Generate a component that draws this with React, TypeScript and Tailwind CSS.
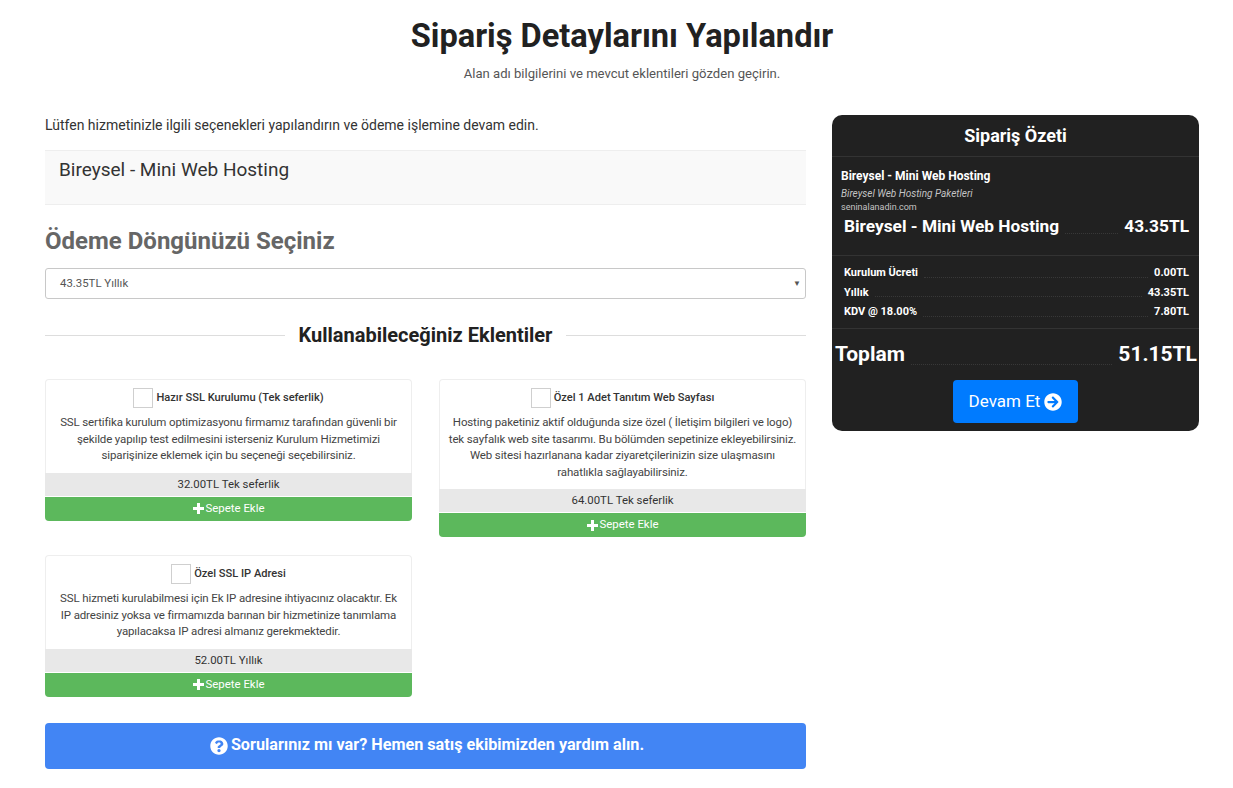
import React from "react";

const heading = "font-['Roboto','Liberation_Sans',sans-serif]";

function ArrowCircle({ size = 18 }: { size?: number }) {
  return (
    <svg width={size} height={size} viewBox="0 0 512 512" fill="currentColor">
      <path d="M256 8c137 0 248 111 248 248S393 504 256 504 8 393 8 256 119 8 256 8zm-28.900 143.600l75.500 72.400H120c-13.300 0-24 10.700-24 24v16c0 13.300 10.700 24 24 24h182.600l-75.500 72.400c-9.700 9.300-9.900 24.800-.4 34.300l11 10.900c9.400 9.400 24.600 9.400 33.900 0L404.300 273c9.400-9.400 9.400-24.600 0-33.900L271.600 106.300c-9.400-9.400-24.600-9.400-33.900 0l-11 10.900c-9.500 9.600-9.300 25.100.4 34.400z" />
    </svg>
  );
}

function QuestionCircle({ size = 18 }: { size?: number }) {
  return (
    <svg width={size} height={size} viewBox="0 0 512 512" fill="currentColor">
      <path d="M504 256c0 137-111 248-248 248S8 393 8 256C8 119 119 8 256 8s248 111 248 248zM262.700 90c-54.500 0-89.300 23-116.500 63.800-3.500 5.300-2.400 12.400 2.700 16.300l34.700 26.300c5.200 3.900 12.600 3 16.700-2.100 17.900-22.700 30.100-35.800 57.300-35.800 20.400 0 45.700 13.100 45.700 33 0 15-12.400 22.700-32.600 34-23.600 13.200-54.800 29.700-54.800 70.900V302c0 6.600 5.400 12 12 12h56c6.600 0 12-5.400 12-12v-1.300c0-28.600 83.500-29.800 83.500-107.200 0-58.300-60.500-102.500-117.200-102.500zM256 338c-25.500 0-46.200 20.700-46.200 46.200 0 25.500 20.700 46.200 46.200 46.200s46.200-20.700 46.200-46.200c0-25.500-20.700-46.200-46.200-46.200z" />
    </svg>
  );
}

function Plus() {
  return (
    <svg width="11" height="11" viewBox="0 0 11 11" fill="currentColor">
      <path d="M4 0h3v4h4v3H7v4H4V7H0V4h4z" />
    </svg>
  );
}

function Addon({ title, lines, price }: { title: string; lines: string[]; price: string }) {
  return (
    <div className="flex flex-col">
      <div className="border border-[#eeeeee] border-b-0 rounded-t-[4px] bg-white pt-[8px] pb-[9px] px-1 text-center">
        <div className="flex items-center justify-center gap-[3px] h-[20px]">
          <span className="w-[20px] h-[20px] border border-[#cfcfcf] bg-white block shrink-0" />
          <span className="text-[11.1px] font-medium text-[#333333]">{title}</span>
        </div>
        <div className="mt-[6px] text-[11.5px] tracking-[-0.13px] leading-[16.5px] text-[#444444]">
          {lines.map((l) => (
            <div key={l} className="whitespace-nowrap">{l}</div>
          ))}
        </div>
      </div>
      <div className="h-[23px] pt-px bg-[#e8e8e8] flex items-center justify-center text-[11.4px] text-[#333333]">
        {price}
      </div>
      <div className="mt-px h-[24px] bg-[#5cb85c] rounded-b-[4px] flex items-center justify-center gap-[2px] text-[11.4px] text-white">
        <Plus />
        <span>Sepete Ekle</span>
      </div>
    </div>
  );
}

function Row({ label, value, className }: { label: string; value: string; className: string }) {
  return (
    <div className={"flex items-end " + className}>
      <span className="whitespace-nowrap">{label}</span>
      <span className="flex-1 mx-[6px] mb-[4px] border-b border-dotted border-[#383838]" />
      <span className="whitespace-nowrap">{value}</span>
    </div>
  );
}

export default function App() {
  return (
    <div className="min-h-[788px] bg-white font-['Roboto','Liberation_Sans',sans-serif] text-[#333333] overflow-hidden">
      <header className="pt-[13px] text-center">
        <h1 className={heading + " text-[32.6px] leading-[46px] font-bold text-[#212121] pl-[11px]"}>
          Sipariş Detaylarını Yapılandır
        </h1>
        <p className="mt-[5px] text-[13.1px] leading-[20px] text-[#555555] pl-[11px]">
          Alan adı bilgilerini ve mevcut eklentileri gözden geçirin.
        </p>
      </header>

      <main className="mt-[31px] pl-[45px] pr-[34px] flex gap-[26px] items-start">
        <section className="w-[761px] shrink-0">
          <p className="text-[14px] leading-[20px] text-[#333333]">
            Lütfen hizmetinizle ilgili seçenekleri yapılandırın ve ödeme işlemine devam edin.
          </p>
          <div className="mt-[15px] h-[55px] bg-[#f9f9f9] border-y border-[#eeeeee] px-[14px] pt-[6px] text-[19px] leading-[26px] text-[#333333]">
            Bireysel - Mini Web Hosting
          </div>
          <h2 className={heading + " mt-[19px] text-[24px] leading-[34px] font-bold text-[#666666]"}>
            Ödeme Döngünüzü Seçiniz
          </h2>
          <div className="mt-[10px] h-[31px] border border-[#c8c8c8] rounded-[3px] bg-white flex items-center justify-between pl-[14px] pr-[4px] text-[11.4px] text-[#555555]">
            <span>43.35TL Yıllık</span>
            <span className="text-[8px] text-[#555555]">▼</span>
          </div>
          <div className="mt-[19px] flex items-center gap-[14px]">
            <span className="flex-1 border-t border-[#dddddd]" />
            <h3 className={heading + " text-[20px] leading-[34px] font-bold text-[#212121]"}>
              Kullanabileceğiniz Eklentiler
            </h3>
            <span className="flex-1 border-t border-[#dddddd]" />
          </div>
          <div className="mt-[27px] grid grid-cols-2 gap-x-[27px] gap-y-[18px] items-start">
            <Addon
              title="Hazır SSL Kurulumu (Tek seferlik)"
              lines={[
                "SSL sertifika kurulum optimizasyonu firmamız tarafından güvenli bir",
                "şekilde yapılıp test edilmesini isterseniz Kurulum Hizmetimizi",
                "siparişinize eklemek için bu seçeneği seçebilirsiniz.",
              ]}
              price="32.00TL Tek seferlik"
            />
            <Addon
              title="Özel 1 Adet Tanıtım Web Sayfası"
              lines={[
                "Hosting paketiniz aktif olduğunda size özel ( İletişim bilgileri ve logo)",
                "tek sayfalık web site tasarımı. Bu bölümden sepetinize ekleyebilirsiniz.",
                "Web sitesi hazırlanana kadar ziyaretçilerinizin size ulaşmasını",
                "rahatlıkla sağlayabilirsiniz.",
              ]}
              price="64.00TL Tek seferlik"
            />
            <Addon
              title="Özel SSL IP Adresi"
              lines={[
                "SSL hizmeti kurulabilmesi için Ek IP adresine ihtiyacınız olacaktır. Ek",
                "IP adresiniz yoksa ve firmamızda barınan bir hizmetinize tanımlama",
                "yapılacaksa IP adresi almanız gerekmektedir.",
              ]}
              price="52.00TL Yıllık"
            />
          </div>
          <div className="mt-[26px] h-[46px] bg-[#4285f4] rounded-[4px] text-white flex items-center justify-center gap-[3px]">
            <span className="ml-[3px] flex"><QuestionCircle /></span>
            <span className={heading + " text-[16.2px] font-bold"}>
              Sorularınız mı var? Hemen satış ekibimizden yardım alın.
            </span>
          </div>
        </section>

        <aside className="w-[367px] shrink-0 bg-[#212121] rounded-[10px] text-white">
          <div className="h-[42px] pb-px flex items-center justify-center border-b border-[#333333] text-[18px] font-bold">
            Sipariş Özeti
          </div>
          <div className="pt-[11px] border-b border-[#333333] h-[99px]">
            <div className="pl-[9px] text-[12px] leading-[16px] font-bold">Bireysel - Mini Web Hosting</div>
            <div className="pl-[9px] mt-[3px] text-[10px] leading-[14px] italic text-[#c4c4c4]">Bireysel Web Hosting Paketleri</div>
            <div className="pl-[9px] text-[9px] leading-[13px] text-[#c4c4c4]">seninalanadin.com</div>
            <Row
              label="Bireysel - Mini Web Hosting"
              value="43.35TL"
              className="pl-[12px] pr-[10px] text-[17.3px] leading-[24px] font-bold"
            />
          </div>
          <div className="pt-[9px] h-[73px] border-b border-[#333333] flex flex-col gap-[3px] text-[11px] leading-[16.500px] font-bold">
            <Row label="Kurulum Ücreti" value="0.00TL" className="pl-[12px] pr-[10px]" />
            <Row label="Yıllık" value="43.35TL" className="pl-[12px] pr-[10px]" />
            <Row label="KDV @ 18.00%" value="7.80TL" className="pl-[12px] pr-[10px]" />
          </div>
          <Row
            label="Toplam"
            value="51.15TL"
            className="mt-[10px] pl-[3px] pr-[2px] text-[21px] leading-[30px] font-bold"
          />
          <div className="mt-[11px] pb-[8px] flex justify-center">
            <div className="w-[125px] h-[43px] bg-[#007bff] rounded-[4px] flex items-center justify-center gap-[4px] text-[17px]">
              <span>Devam Et</span>
              <ArrowCircle />
            </div>
          </div>
        </aside>
      </main>
    </div>
  );
}
